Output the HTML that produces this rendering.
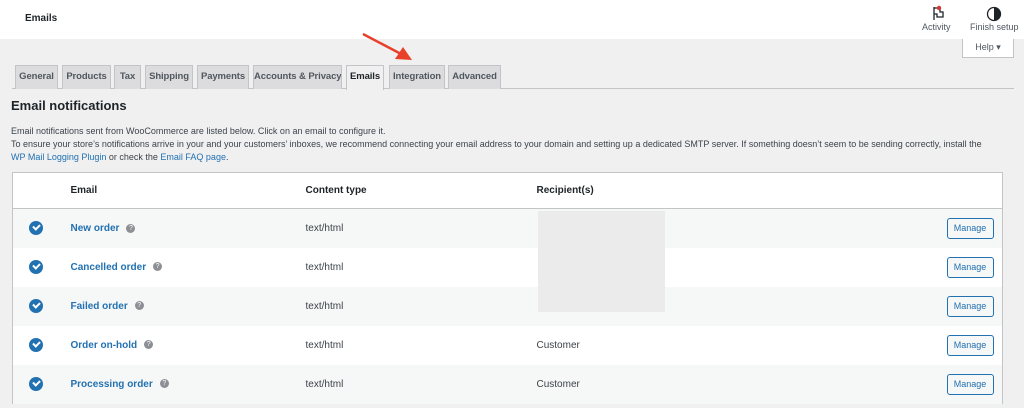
<!DOCTYPE html>
<html><head><style>
*{margin:0;padding:0;box-sizing:border-box}
html,body{width:1024px;height:408px;overflow:hidden}
body{background:#f0f0f1;font-family:"Liberation Sans",sans-serif;color:#3c434a;position:relative;font-size:10px}
.top{position:absolute;left:0;top:0;width:1024px;height:39px;background:#fff}
.abs{position:absolute}
.tab{position:absolute;top:65px;height:24px;background:#dcdcde;border:1px solid #c3c4c7;border-bottom:none;font-size:9.5px;font-weight:bold;color:#50575e;text-align:center;line-height:22px;white-space:nowrap;overflow:hidden;letter-spacing:-0.1px}
.tab.act{background:#f0f0f1;color:#1d2327;height:25px}
a{color:#2271b1}
table{position:absolute;left:12px;top:172px;width:991px;border:1px solid #c3c4c7;border-bottom:none;border-collapse:collapse;background:#fff}
td,th{font-size:10px;text-align:left;padding:0;height:39px}
th{height:36px;font-weight:bold;color:#1d2327;border-bottom:1px solid #c3c4c7}
tr.g td{background:#f6f7f7}
.nm{color:#2271b1;font-weight:bold}
.q{display:inline-block;width:9px;height:9px;border-radius:50%;background:#8c8f94;color:#fff;font-size:7px;line-height:9px;text-align:center;margin-left:7px;vertical-align:middle}
.chk{display:inline-block;width:14px;height:14px;border-radius:50%;background:#2271b1;margin-left:16px;vertical-align:middle;position:relative}
.chk::after{content:"";position:absolute;left:4px;top:3px;width:5px;height:3px;border-left:2px solid #fff;border-bottom:2px solid #fff;transform:rotate(-45deg)}
.btn{display:inline-block;width:47px;height:21px;border:1px solid #2271b1;border-radius:3px;background:#f6f7f7;color:#2271b1;font-size:9px;line-height:19px;text-align:center}
</style></head><body>
<div class="top"></div>
<div class="abs" style="left:25px;top:13px;font-size:10px;font-weight:bold;color:#1d2327">Emails</div>
<svg class="abs" style="left:930px;top:5px" width="16" height="16" viewBox="0 0 16 16"><path d="M4 2v13M4 3h6v4h3v5H7V9H4" fill="none" stroke="#1d2327" stroke-width="1.3"/><circle cx="9" cy="3" r="2.2" fill="#d63638"/></svg>
<div class="abs" style="left:922px;top:22px;font-size:9px;color:#50575e">Activity</div>
<svg class="abs" style="left:986px;top:6px" width="16" height="16" viewBox="0 0 16 16"><circle cx="8" cy="8" r="6.5" fill="none" stroke="#1d2327" stroke-width="1.3"/><path d="M8 1.5a6.5 6.5 0 0 1 0 13z" fill="#1d2327"/></svg>
<div class="abs" style="left:970px;top:22px;font-size:9px;color:#50575e">Finish setup</div>
<div class="abs" style="left:962px;top:39px;width:52px;height:19px;background:#fff;border:1px solid #c3c4c7;border-top:none;font-size:9px;color:#50575e;text-align:center;line-height:17px">Help ▾</div>
<svg class="abs" style="left:355px;top:28px" width="60" height="40"><line x1="8" y1="6" x2="48" y2="27" stroke="#e8412b" stroke-width="2.5"/><polygon points="57,32 40,31 48,19" fill="#e8412b"/></svg>
<div class="abs" style="left:12px;top:88px;width:1002px;height:1px;background:#c3c4c7"></div>
<div class="tab" style="left:15px;width:43px">General</div>
<div class="tab" style="left:62px;width:49px">Products</div>
<div class="tab" style="left:114px;width:27px">Tax</div>
<div class="tab" style="left:145px;width:48px">Shipping</div>
<div class="tab" style="left:197px;width:52px">Payments</div>
<div class="tab" style="left:253px;width:89px">Accounts &amp; Privacy</div>
<div class="tab act" style="left:346px;width:38px">Emails</div>
<div class="tab" style="left:389px;width:56px">Integration</div>
<div class="tab" style="left:448px;width:53px">Advanced</div>
<div class="abs" style="left:11px;top:98px;font-size:13px;font-weight:bold;color:#1d2327">Email notifications</div>
<div class="abs" style="left:11px;top:125px;font-size:9px;line-height:13px;color:#3c434a;width:1010px">Email notifications sent from WooCommerce are listed below. Click on an email to configure it.<br>To ensure your store’s notifications arrive in your and your customers’ inboxes, we recommend connecting your email address to your domain and setting up a dedicated SMTP server. If something doesn’t seem to be sending correctly, install the<br><a>WP Mail Logging Plugin</a> or check the <a>Email FAQ page</a>.</div>
<table>
<tr><th style="width:58px"></th><th style="width:235px">Email</th><th style="width:231px">Content type</th><th>Recipient(s)</th><th style="width:56px"></th></tr>
<tr class="g"><td><span class="chk"></span></td><td><span class="nm">New order</span><span class="q">?</span></td><td>text/html</td><td></td><td><span class="btn">Manage</span></td></tr>
<tr><td><span class="chk"></span></td><td><span class="nm">Cancelled order</span><span class="q">?</span></td><td>text/html</td><td></td><td><span class="btn">Manage</span></td></tr>
<tr class="g"><td><span class="chk"></span></td><td><span class="nm">Failed order</span><span class="q">?</span></td><td>text/html</td><td></td><td><span class="btn">Manage</span></td></tr>
<tr><td><span class="chk"></span></td><td><span class="nm">Order on-hold</span><span class="q">?</span></td><td>text/html</td><td>Customer</td><td><span class="btn">Manage</span></td></tr>
<tr class="g"><td><span class="chk"></span></td><td><span class="nm">Processing order</span><span class="q">?</span></td><td>text/html</td><td>Customer</td><td><span class="btn">Manage</span></td></tr>
</table>
<div class="abs" style="left:538px;top:211px;width:127px;height:101px;background:#ebebeb"></div>
</body></html>
